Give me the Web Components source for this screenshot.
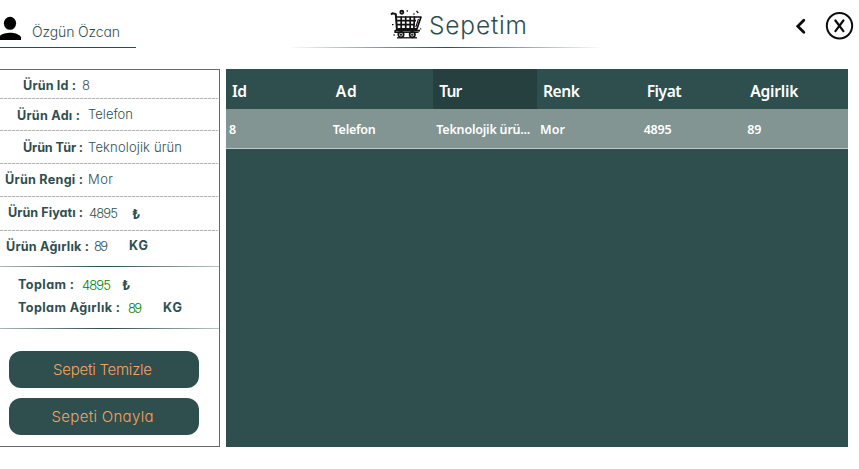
<!DOCTYPE html>
<html lang="tr"><head><meta charset="utf-8"><title>Sepetim</title>
<style>
body{margin:0;background:#fff;width:859px;height:469px;overflow:hidden;font-family:Inter,"Liberation Sans",sans-serif;color:#2f4f4f}
</style></head><body>
<cart-app></cart-app>
<script>
const define=(name,html,init)=>customElements.define(name,class extends HTMLElement{
  connectedCallback(){
    if(this.shadowRoot)return;
    this.attachShadow({mode:'open'}).innerHTML=html;
    if(init)init.call(this,this.shadowRoot);
  }
});

/* Text set to a fixed measure: w = width, g = gap before, t = top margin, s = size */
define('fit-text',`<style>
:host{display:block;flex:none;height:20px;line-height:20px;white-space:pre;font-weight:300;font-size:13px;font-feature-settings:"cv11","calt" 0}
:host([bold]){font-weight:700;font-size:12.6px;padding-top:1px}
:host([green]){color:#008000}
:host([ui]){font-family:"Noto Sans","Open Sans",sans-serif;font-weight:600}
:host([head]){font-weight:570}
span{display:inline-block}
</style><span><slot></slot></span>`,function(root){
  const a=n=>parseFloat(this.getAttribute(n)||0), span=root.querySelector('span');
  if(a('s'))this.style.fontSize=a('s')+'px';
  this.style.marginLeft=a('g')+'px';
  this.style.marginTop=a('t')+'px';
  const w=a('w');
  if(w){
    const nat=span.getBoundingClientRect().width, n=this.textContent.length;
    this.style.letterSpacing=(n>1?(w-nat)/(n-1):0)+'px';
    this.style.width=w+'px';
  }
});

define('info-row',`<style>
:host{display:flex;align-items:flex-start;box-sizing:border-box;flex:none;position:relative}
:host([dash])::after,:host([fade])::after{content:"";position:absolute;left:0;right:0;bottom:0;height:1px}
:host([dash])::after{right:1px;background:repeating-linear-gradient(90deg,#b4b4b4 0 3px,#e4e4e4 3px 4px)}
:host([fade])::after{background:linear-gradient(90deg,#a9b8b8 0,#2f4f4f 46%,#2f4f4f 50%,#b9c5c5 100%)}
</style><slot></slot>`,function(){this.style.height=this.getAttribute('h')+'px'});

define('pill-button',`<style>
:host{display:block;flex:none}
button{all:unset;display:flex;justify-content:center;box-sizing:border-box;width:190px;height:37px;padding:9px 3px 0 0;border-radius:12px;background:#2f4f4f;color:#f4a460}
</style><button><slot></slot></button>`);

define('product-panel',`<style>
:host{display:flex;flex-direction:column;box-sizing:border-box;width:220px;height:378px;border:1px solid #696969;border-left:0}
.buttons{display:flex;flex-direction:column;gap:10px;padding:22px 0 0 9px}
</style>
<info-row h="29" dash><fit-text bold g="23" w="53" t="5">Ürün Id :</fit-text><fit-text g="6" w="8" t="5">8</fit-text></info-row>
<info-row h="32" dash><fit-text bold g="17" w="63" t="6">Ürün Adı :</fit-text><fit-text g="8" w="45" t="5">Telefon</fit-text></info-row>
<info-row h="33" dash><fit-text bold g="23" w="60" t="6">Ürün Tür :</fit-text><fit-text g="5" w="94" t="6">Teknolojik ürün</fit-text></info-row>
<info-row h="33" dash><fit-text bold g="5" w="78" t="5">Ürün Rengi :</fit-text><fit-text g="5" w="25" t="5">Mor</fit-text></info-row>
<info-row h="34" dash><fit-text bold g="8" w="75" t="5">Ürün Fiyatı :</fit-text><fit-text g="6" w="29" t="6">4895</fit-text><fit-text bold g="14" t="6" s="13">₺</fit-text></info-row>
<info-row h="36" fade><fit-text bold g="6" w="83" t="5">Ürün Ağırlık :</fit-text><fit-text g="5" w="14" t="5">89</fit-text><fit-text bold g="21" w="19" t="4">KG</fit-text></info-row>
<info-row h="31"><fit-text bold g="18" w="56" t="7">Toplam :</fit-text><fit-text green g="8" w="29" t="8">4895</fit-text><fit-text bold g="11" t="7" s="13">₺</fit-text></info-row>
<info-row h="31" fade><fit-text bold g="18" w="102" t="-1">Toplam Ağırlık :</fit-text><fit-text green g="8" w="14" t="0">89</fit-text><fit-text bold g="21" w="19" t="-1">KG</fit-text></info-row>
<div class="buttons">
<pill-button><fit-text s="15" w="99">Sepeti Temizle</fit-text></pill-button>
<pill-button><fit-text s="15" w="102">Sepeti Onayla</fit-text></pill-button>
</div>`);

define('cart-table',`<style>
:host{display:block;width:622px;height:378px;background:#2f4f4f;color:#fff}
.r{display:grid;grid-template-columns:repeat(6,1fr);height:40px}
.r>div{display:flex;align-items:flex-start;overflow:hidden}
.sel{background:#263f3f}
.data{box-sizing:border-box;background:#829593;border-bottom:1px solid #c1caca}
</style>
<div class="r">
<div><fit-text ui head s="15.6" g="6" t="12" w="15">Id</fit-text></div>
<div><fit-text ui head s="15.6" g="6" t="12" w="21">Ad</fit-text></div>
<div class="sel"><fit-text ui head s="15.6" g="6" t="12" w="23">Tur</fit-text></div>
<div><fit-text ui head s="15.6" g="6" t="12" w="37">Renk</fit-text></div>
<div><fit-text ui head s="15.6" g="6" t="12" w="35">Fiyat</fit-text></div>
<div><fit-text ui head s="15.6" g="6" t="12" w="48">Agirlik</fit-text></div>
</div>
<div class="r data">
<div><fit-text ui s="12.5" g="3" t="11" w="7">8</fit-text></div>
<div><fit-text ui s="12.5" g="3" t="11" w="43">Telefon</fit-text></div>
<div><fit-text ui s="12.5" g="3" t="11" w="94">Teknolojik ürü...</fit-text></div>
<div><fit-text ui s="12.5" g="3" t="11" w="25">Mor</fit-text></div>
<div><fit-text ui s="12.5" g="3" t="11" w="28">4895</fit-text></div>
<div><fit-text ui s="12.5" g="3" t="11" w="14">89</fit-text></div>
</div>`);

define('cart-icon',`<style>:host{display:block;flex:none;width:34px;height:32px}svg{display:block}</style>
<svg width="34" height="32" viewBox="0 0 34 32" fill="none" stroke="#111" stroke-width="1.4" stroke-linejoin="round">
<path d="M1 6.6L2.5 5.3L5.8 6.1L7 22.5" stroke-width="2"/>
<path d="M6.5 9H31L27 20.8H7.5M5.2 25V22.7H30" stroke-width="1.7"/>
<path d="M5 24.3H28.5" stroke-width="1.3"/>
<path d="M11.2 8.5V21M15.7 8.5V21M20.2 8.5V21M24.5 8.5L23.8 21M7 12.6H26M7 16.6H25" stroke-width="1.7"/>
<path d="M28.5 11L25.8 19" stroke-width="1.1"/>
<circle cx="11" cy="26.6" r="2.7" stroke-width="1.7"/><circle cx="22.3" cy="26.6" r="2.7" stroke-width="1.7"/>
<circle cx="11" cy="26.6" r=".5"/><circle cx="22.3" cy="26.6" r=".5"/>
<path d="M7 29.8H27" stroke-width="1.3"/>
<circle cx="11.8" cy="4.3" r="1.5" stroke-width="1.9"/>
<path d="M16.7 3h1.2M23.5 6.5l1-1M26.5 2.8l1.8 2.2M2 16.6h1.5M3.5 27h1.2M30.2 20.8h1" stroke-width="1.3"/>
</svg>`);

define('page-header',`<style>
:host{display:grid;grid-template-columns:288px 316px 1fr;height:69px}
.user{display:flex;box-sizing:border-box;width:136px;height:48px;border-bottom:1px solid #2f4f4f}
.user svg{flex:none;margin-top:16px}
.title{display:flex;align-items:flex-start;box-sizing:border-box;height:48px;padding:8px 0 0 102px;background:linear-gradient(90deg,#fff,#2f4f4f 50%,#fff) bottom/100% 1px no-repeat}
.nav svg{display:block}
</style>
<div class="user"><svg width="22" height="25" viewBox="0 0 22 25"><ellipse cx="10" cy="7.3" rx="6.1" ry="6.5"/><path d="M-1 24V21C1 17.8 6 16.8 10 16.8S19.5 18 21 21.3V24Z"/></svg>
<fit-text g="10" t="22" s="14" w="88">Özgün Özcan</fit-text></div>
<div class="title"><cart-icon></cart-icon><fit-text g="5" t="7" s="24.5" w="98">Sepetim</fit-text></div>
<div class="nav"><svg width="255" height="60" viewBox="0 0 255 60" fill="none" stroke="#0c0c0c"><path d="M199.8 20.3L193.8 26.3L199.8 32.2" stroke-width="2.8" stroke-linecap="round"/><circle cx="235.5" cy="25.7" r="12.7" stroke-width="2"/><path d="M231.4 20.5L239.4 31.1M239.4 20.5L231.4 31.1" stroke-width="2.2" stroke-linecap="round"/></svg></div>`);

define('cart-app',`<style>:host{display:block;width:859px;height:469px}main{display:flex;gap:6px}</style>
<page-header></page-header><main><product-panel></product-panel><cart-table></cart-table></main>`);
</script>
</body></html>
